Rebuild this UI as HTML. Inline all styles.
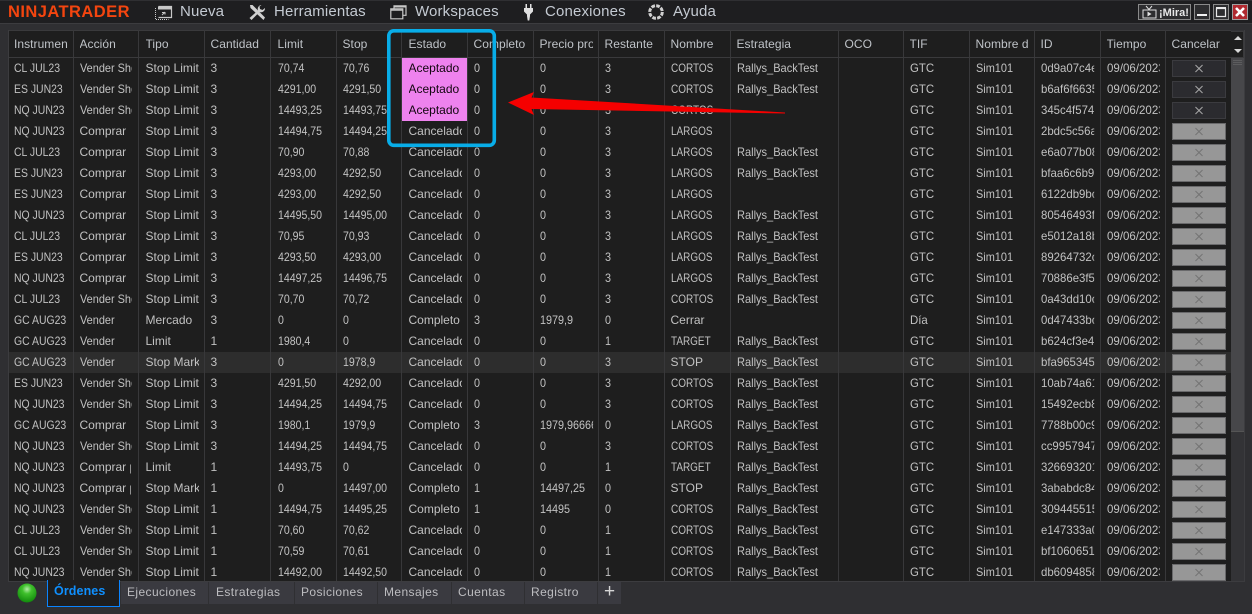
<!DOCTYPE html>
<html><head><meta charset="utf-8"><style>
html,body{margin:0;padding:0}
body{width:1252px;height:614px;position:relative;overflow:hidden;background:#2f2f32;font-family:"Liberation Sans",sans-serif;color:#c2c2c2;font-size:12px}
#top{position:absolute;left:0;top:1px;width:1252px;height:22px;background:#1e1e20;border-bottom:1px solid #3c3c3f}
.m{position:absolute;top:3px;font-size:15px;line-height:18px;color:#c4cad2;letter-spacing:.15px}
#logo{position:absolute;left:8px;top:3px;font-size:16.5px;line-height:18px;font-weight:bold;color:#f4450f;letter-spacing:.45px}
svg{position:absolute;overflow:visible}
#grid{position:absolute;left:8px;top:30px;width:1236px;height:552px;background:#333336;border:0}
table{border-collapse:collapse;table-layout:fixed;width:1223px;position:absolute;left:0;top:0}
td,th{padding:0;border-right:1px solid #38383a;height:21px;overflow:hidden;white-space:nowrap;font-weight:normal;text-align:left;background:#1e1e1e;line-height:21px}
th{height:26px;border-bottom:1px solid #3a3a3c;border-top:1px solid #3a3a3c;color:#bfc3c8;line-height:26px}
th b{display:block;font-weight:normal;overflow:hidden;margin:0 5px 0 6px;letter-spacing:.05px}
td b{--s:1;display:block;font-weight:normal;overflow:hidden;margin:0 0 0 6px;transform:scaleX(var(--s));transform-origin:0 0;width:calc(53px / var(--s))}
td:nth-child(3) b,td:nth-child(5) b,td:nth-child(7) b,th:nth-child(3) b,th:nth-child(5) b,th:nth-child(7) b{margin-left:7px}
td:nth-child(1) b{--s:.87}
td:nth-child(2) b{--s:.91;width:calc(51.8px / var(--s))}
td:nth-child(5) b,td:nth-child(6) b{--s:.88}
td:nth-child(8) b,td:nth-child(9) b,td:nth-child(10) b{--s:.9}
td:nth-child(11) b{--s:.83;width:70px}
td:nth-child(12) b{--s:.92;width:105px}
td:nth-child(14) b{--s:.95}
td:nth-child(15) b{--s:.91}
td:nth-child(16) b{--s:.95}
td:nth-child(17) b{--s:.96}
b.w{--s:1!important}
tr.h td{background:#2d2d2d}
td.p{background:#ee82ee;color:#12060f}
.a,.d{display:block;width:54px;height:17px;margin:0 0 0 6px;box-sizing:border-box;position:relative}
.a{background:#2b2b2f;border:1px solid #3b3b3f}
.d{background:#979797;border:1px solid #69696b}
.a:before,.a:after,.d:before,.d:after{content:"";position:absolute;left:21px;top:7px;width:10px;height:1px;background:#a8a8a8;transform:rotate(45deg)}
.a:after,.d:after{transform:rotate(-45deg)}
.d:before,.d:after{background:#747474}
#wrap{position:absolute;left:0;top:0;width:1223px;height:552px;overflow:hidden}
.tab{position:absolute;top:582px;height:22px;background:#3a3a40;line-height:20px;color:#bdbdc0;letter-spacing:.4px;white-space:nowrap;box-sizing:border-box}
</style></head><body>
<div id="top"></div>
<div id="logo">NINJATRADER</div>

<svg style="left:155px;top:5px" width="18" height="15" fill="none" stroke="#c8c8c8"><path d="M3.500 1.500h13v11h-13" stroke-width="1.200"/><path d="M3 1.500h13v3H3z" fill="#c8c8c8" stroke="none"/><path d="M.5 3v11.500h13" stroke-dasharray="1 1"/><path d="M7 10l3-3M7 7.500h3v2" stroke-width="1"/></svg>
<div class="m" style="left:180px">Nueva</div>
<svg style="left:248px;top:4px" width="19" height="17"><path d="M2 1l2.500 0 12.500 12.500-1.500 2.500L2.500 4z" fill="#d0d0d0"/><path d="M13.500 1a4 4 0 0 0-3.500 5.500L1.500 14l2 2 8-8a4 4 0 0 0 5.500-4l-2.500 2-2.500-1-.5-2.500z" fill="#d0d0d0"/></svg>
<div class="m" style="left:274px">Herramientas</div>
<svg style="left:390px;top:5px" width="17" height="15" fill="none" stroke="#c8c8c8" stroke-width="1.200"><path d="M4 3.500V.8h12v9.500h-3"/><path d="M.8 3.800h12v10H.800z"/><path d="M4 1.800h12M1 5h12" stroke-width="1.500"/></svg>
<div class="m" style="left:415px">Workspaces</div>
<svg style="left:523px;top:4px" width="11" height="17" fill="#e0e0e0"><path d="M2.500 0h1.500v4h3V0h1.500v4H10v3.500L7 10.500V12L6.300 16.500H4.700L4 12V10.500L1 7.500V4h1.500z"/></svg>
<div class="m" style="left:545px">Conexiones</div>
<svg style="left:647px;top:3px" width="18" height="18" fill="none"><circle cx="9" cy="9" r="6.300" stroke="#d0d0d0" stroke-width="3" stroke-dasharray="3.700 1.250"/></svg>
<div class="m" style="left:673px">Ayuda</div>

<svg style="left:1138px;top:4px" width="110" height="17">
<rect x=".5" y=".5" width="52" height="15" fill="#2d2d2f" stroke="#8a8a8a"/>
<path d="M5 6h13v8H5z" fill="none" stroke="#e0e0e0"/><path d="M9.500 7.500l4 2.500-4 2.500z" fill="#e0e0e0"/><path d="M8 2l3 3.500L14 2" fill="none" stroke="#e0e0e0"/>
<text x="21" y="12" font-size="11" font-weight="bold" fill="#e8e8e8" font-family="Liberation Sans">¡Mira!</text>
<rect x="56.500" y=".5" width="15" height="15" fill="#2d2d2f" stroke="#8a8a8a"/><path d="M59 10h10v2H59z" fill="#f0f0f0"/>
<rect x="75.500" y=".5" width="15" height="15" fill="#2d2d2f" stroke="#8a8a8a"/><path d="M78.500 4.500h9v8h-9z" fill="none" stroke="#e8e8e8" stroke-width="1.200"/><path d="M78 3h10v2H78z" fill="#e8e8e8"/>
<rect x="94.500" y=".5" width="15" height="15" fill="#b02a30" stroke="#a0a0a0"/><path d="M98 4l8 8m0-8l-8 8" stroke="#fff" stroke-width="2.600"/>
</svg>

<div id="grid"><div id="wrap">
<table>
<colgroup><col style="width:65px"><col style="width:65px"><col style="width:66px"><col style="width:66px"><col style="width:66px"><col style="width:65px"><col style="width:66px"><col style="width:66px"><col style="width:65px"><col style="width:66px"><col style="width:66px"><col style="width:108px"><col style="width:65px"><col style="width:66px"><col style="width:65px"><col style="width:66px"><col style="width:65px"><col style="width:66px"></colgroup>
<tr><th><b>Instrumento</b></th><th><b>Acción</b></th><th><b>Tipo</b></th><th><b>Cantidad</b></th><th><b>Limit</b></th><th><b>Stop</b></th><th><b>Estado</b></th><th><b>Completo</b></th><th><b>Precio promedio</b></th><th><b>Restante</b></th><th><b>Nombre</b></th><th><b>Estrategia</b></th><th><b>OCO</b></th><th><b>TIF</b></th><th><b>Nombre de cuenta</b></th><th><b>ID</b></th><th><b>Tiempo</b></th><th><b>Cancelar</b></th></tr>
<tr><td><b>CL JUL23</b></td><td><b>Vender Short</b></td><td><b>Stop Limit</b></td><td><b>3</b></td><td><b>70,74</b></td><td><b>70,76</b></td><td class="p"><b>Aceptado</b></td><td><b>0</b></td><td><b>0</b></td><td><b>3</b></td><td><b>CORTOS</b></td><td><b>Rallys_BackTest</b></td><td></td><td><b>GTC</b></td><td><b>Sim101</b></td><td><b>0d9a07c4e1</b></td><td><b>09/06/2023</b></td><td><span class="a"></span></td></tr>
<tr><td><b>ES JUN23</b></td><td><b>Vender Short</b></td><td><b>Stop Limit</b></td><td><b>3</b></td><td><b>4291,00</b></td><td><b>4291,50</b></td><td class="p"><b>Aceptado</b></td><td><b>0</b></td><td><b>0</b></td><td><b>3</b></td><td><b>CORTOS</b></td><td><b>Rallys_BackTest</b></td><td></td><td><b>GTC</b></td><td><b>Sim101</b></td><td><b>b6af6f6635</b></td><td><b>09/06/2023</b></td><td><span class="a"></span></td></tr>
<tr><td><b>NQ JUN23</b></td><td><b>Vender Short</b></td><td><b>Stop Limit</b></td><td><b>3</b></td><td><b>14493,25</b></td><td><b>14493,75</b></td><td class="p"><b>Aceptado</b></td><td><b>0</b></td><td><b>0</b></td><td><b>3</b></td><td><b>CORTOS</b></td><td></td><td></td><td><b>GTC</b></td><td><b>Sim101</b></td><td><b>345c4f5743</b></td><td><b>09/06/2023</b></td><td><span class="a"></span></td></tr>
<tr><td><b>NQ JUN23</b></td><td><b class="w">Comprar</b></td><td><b>Stop Limit</b></td><td><b>3</b></td><td><b>14494,75</b></td><td><b>14494,25</b></td><td><b>Cancelado</b></td><td><b>0</b></td><td><b>0</b></td><td><b>3</b></td><td><b>LARGOS</b></td><td></td><td></td><td><b>GTC</b></td><td><b>Sim101</b></td><td><b>2bdc5c56a1</b></td><td><b>09/06/2023</b></td><td><span class="d"></span></td></tr>
<tr><td><b>CL JUL23</b></td><td><b class="w">Comprar</b></td><td><b>Stop Limit</b></td><td><b>3</b></td><td><b>70,90</b></td><td><b>70,88</b></td><td><b>Cancelado</b></td><td><b>0</b></td><td><b>0</b></td><td><b>3</b></td><td><b>LARGOS</b></td><td><b>Rallys_BackTest</b></td><td></td><td><b>GTC</b></td><td><b>Sim101</b></td><td><b>e6a077b081</b></td><td><b>09/06/2023</b></td><td><span class="d"></span></td></tr>
<tr><td><b>ES JUN23</b></td><td><b class="w">Comprar</b></td><td><b>Stop Limit</b></td><td><b>3</b></td><td><b>4293,00</b></td><td><b>4292,50</b></td><td><b>Cancelado</b></td><td><b>0</b></td><td><b>0</b></td><td><b>3</b></td><td><b>LARGOS</b></td><td><b>Rallys_BackTest</b></td><td></td><td><b>GTC</b></td><td><b>Sim101</b></td><td><b>bfaa6c6b91</b></td><td><b>09/06/2023</b></td><td><span class="d"></span></td></tr>
<tr><td><b>ES JUN23</b></td><td><b class="w">Comprar</b></td><td><b>Stop Limit</b></td><td><b>3</b></td><td><b>4293,00</b></td><td><b>4292,50</b></td><td><b>Cancelado</b></td><td><b>0</b></td><td><b>0</b></td><td><b>3</b></td><td><b>LARGOS</b></td><td></td><td></td><td><b>GTC</b></td><td><b>Sim101</b></td><td><b>6122db9bc1</b></td><td><b>09/06/2023</b></td><td><span class="d"></span></td></tr>
<tr><td><b>NQ JUN23</b></td><td><b class="w">Comprar</b></td><td><b>Stop Limit</b></td><td><b>3</b></td><td><b>14495,50</b></td><td><b>14495,00</b></td><td><b>Cancelado</b></td><td><b>0</b></td><td><b>0</b></td><td><b>3</b></td><td><b>LARGOS</b></td><td><b>Rallys_BackTest</b></td><td></td><td><b>GTC</b></td><td><b>Sim101</b></td><td><b>80546493f1</b></td><td><b>09/06/2023</b></td><td><span class="d"></span></td></tr>
<tr><td><b>CL JUL23</b></td><td><b class="w">Comprar</b></td><td><b>Stop Limit</b></td><td><b>3</b></td><td><b>70,95</b></td><td><b>70,93</b></td><td><b>Cancelado</b></td><td><b>0</b></td><td><b>0</b></td><td><b>3</b></td><td><b>LARGOS</b></td><td><b>Rallys_BackTest</b></td><td></td><td><b>GTC</b></td><td><b>Sim101</b></td><td><b>e5012a18b1</b></td><td><b>09/06/2023</b></td><td><span class="d"></span></td></tr>
<tr><td><b>ES JUN23</b></td><td><b class="w">Comprar</b></td><td><b>Stop Limit</b></td><td><b>3</b></td><td><b>4293,50</b></td><td><b>4293,00</b></td><td><b>Cancelado</b></td><td><b>0</b></td><td><b>0</b></td><td><b>3</b></td><td><b>LARGOS</b></td><td><b>Rallys_BackTest</b></td><td></td><td><b>GTC</b></td><td><b>Sim101</b></td><td><b>89264732c1</b></td><td><b>09/06/2023</b></td><td><span class="d"></span></td></tr>
<tr><td><b>NQ JUN23</b></td><td><b class="w">Comprar</b></td><td><b>Stop Limit</b></td><td><b>3</b></td><td><b>14497,25</b></td><td><b>14496,75</b></td><td><b>Cancelado</b></td><td><b>0</b></td><td><b>0</b></td><td><b>3</b></td><td><b>LARGOS</b></td><td><b>Rallys_BackTest</b></td><td></td><td><b>GTC</b></td><td><b>Sim101</b></td><td><b>70886e3f51</b></td><td><b>09/06/2023</b></td><td><span class="d"></span></td></tr>
<tr><td><b>CL JUL23</b></td><td><b>Vender Short</b></td><td><b>Stop Limit</b></td><td><b>3</b></td><td><b>70,70</b></td><td><b>70,72</b></td><td><b>Cancelado</b></td><td><b>0</b></td><td><b>0</b></td><td><b>3</b></td><td><b>CORTOS</b></td><td><b>Rallys_BackTest</b></td><td></td><td><b>GTC</b></td><td><b>Sim101</b></td><td><b>0a43dd10c1</b></td><td><b>09/06/2023</b></td><td><span class="d"></span></td></tr>
<tr><td><b>GC AUG23</b></td><td><b>Vender</b></td><td><b>Mercado</b></td><td><b>3</b></td><td><b>0</b></td><td><b>0</b></td><td><b>Completo</b></td><td><b>3</b></td><td><b>1979,9</b></td><td><b>0</b></td><td><b class="w">Cerrar</b></td><td></td><td></td><td><b>Día</b></td><td><b>Sim101</b></td><td><b>0d47433bc1</b></td><td><b>09/06/2023</b></td><td><span class="d"></span></td></tr>
<tr><td><b>GC AUG23</b></td><td><b>Vender</b></td><td><b>Limit</b></td><td><b>1</b></td><td><b>1980,4</b></td><td><b>0</b></td><td><b>Cancelado</b></td><td><b>0</b></td><td><b>0</b></td><td><b>1</b></td><td><b>TARGET</b></td><td><b>Rallys_BackTest</b></td><td></td><td><b>GTC</b></td><td><b>Sim101</b></td><td><b>b624cf3e41</b></td><td><b>09/06/2023</b></td><td><span class="d"></span></td></tr>
<tr class="h"><td><b>GC AUG23</b></td><td><b>Vender</b></td><td><b>Stop Market</b></td><td><b>3</b></td><td><b>0</b></td><td><b>1978,9</b></td><td><b>Cancelado</b></td><td><b>0</b></td><td><b>0</b></td><td><b>3</b></td><td><b class="w">STOP</b></td><td><b>Rallys_BackTest</b></td><td></td><td><b>GTC</b></td><td><b>Sim101</b></td><td><b>bfa9653451</b></td><td><b>09/06/2023</b></td><td><span class="d"></span></td></tr>
<tr><td><b>ES JUN23</b></td><td><b>Vender Short</b></td><td><b>Stop Limit</b></td><td><b>3</b></td><td><b>4291,50</b></td><td><b>4292,00</b></td><td><b>Cancelado</b></td><td><b>0</b></td><td><b>0</b></td><td><b>3</b></td><td><b>CORTOS</b></td><td><b>Rallys_BackTest</b></td><td></td><td><b>GTC</b></td><td><b>Sim101</b></td><td><b>10ab74a611</b></td><td><b>09/06/2023</b></td><td><span class="d"></span></td></tr>
<tr><td><b>NQ JUN23</b></td><td><b>Vender Short</b></td><td><b>Stop Limit</b></td><td><b>3</b></td><td><b>14494,25</b></td><td><b>14494,75</b></td><td><b>Cancelado</b></td><td><b>0</b></td><td><b>0</b></td><td><b>3</b></td><td><b>CORTOS</b></td><td><b>Rallys_BackTest</b></td><td></td><td><b>GTC</b></td><td><b>Sim101</b></td><td><b>15492ecb81</b></td><td><b>09/06/2023</b></td><td><span class="d"></span></td></tr>
<tr><td><b>GC AUG23</b></td><td><b class="w">Comprar</b></td><td><b>Stop Limit</b></td><td><b>3</b></td><td><b>1980,1</b></td><td><b>1979,9</b></td><td><b>Completo</b></td><td><b>3</b></td><td><b>1979,96666</b></td><td><b>0</b></td><td><b>LARGOS</b></td><td><b>Rallys_BackTest</b></td><td></td><td><b>GTC</b></td><td><b>Sim101</b></td><td><b>7788b00c91</b></td><td><b>09/06/2023</b></td><td><span class="d"></span></td></tr>
<tr><td><b>NQ JUN23</b></td><td><b>Vender Short</b></td><td><b>Stop Limit</b></td><td><b>3</b></td><td><b>14494,25</b></td><td><b>14494,75</b></td><td><b>Cancelado</b></td><td><b>0</b></td><td><b>0</b></td><td><b>3</b></td><td><b>CORTOS</b></td><td><b>Rallys_BackTest</b></td><td></td><td><b>GTC</b></td><td><b>Sim101</b></td><td><b>cc99579471</b></td><td><b>09/06/2023</b></td><td><span class="d"></span></td></tr>
<tr><td><b>NQ JUN23</b></td><td><b class="w">Comprar para</b></td><td><b>Limit</b></td><td><b>1</b></td><td><b>14493,75</b></td><td><b>0</b></td><td><b>Cancelado</b></td><td><b>0</b></td><td><b>0</b></td><td><b>1</b></td><td><b>TARGET</b></td><td><b>Rallys_BackTest</b></td><td></td><td><b>GTC</b></td><td><b>Sim101</b></td><td><b>3266932011</b></td><td><b>09/06/2023</b></td><td><span class="d"></span></td></tr>
<tr><td><b>NQ JUN23</b></td><td><b class="w">Comprar para</b></td><td><b>Stop Market</b></td><td><b>1</b></td><td><b>0</b></td><td><b>14497,00</b></td><td><b>Completo</b></td><td><b>1</b></td><td><b>14497,25</b></td><td><b>0</b></td><td><b class="w">STOP</b></td><td><b>Rallys_BackTest</b></td><td></td><td><b>GTC</b></td><td><b>Sim101</b></td><td><b>3ababdc841</b></td><td><b>09/06/2023</b></td><td><span class="d"></span></td></tr>
<tr><td><b>NQ JUN23</b></td><td><b>Vender Short</b></td><td><b>Stop Limit</b></td><td><b>1</b></td><td><b>14494,75</b></td><td><b>14495,25</b></td><td><b>Completo</b></td><td><b>1</b></td><td><b>14495</b></td><td><b>0</b></td><td><b>CORTOS</b></td><td><b>Rallys_BackTest</b></td><td></td><td><b>GTC</b></td><td><b>Sim101</b></td><td><b>3094455151</b></td><td><b>09/06/2023</b></td><td><span class="d"></span></td></tr>
<tr><td><b>CL JUL23</b></td><td><b>Vender Short</b></td><td><b>Stop Limit</b></td><td><b>1</b></td><td><b>70,60</b></td><td><b>70,62</b></td><td><b>Cancelado</b></td><td><b>0</b></td><td><b>0</b></td><td><b>1</b></td><td><b>CORTOS</b></td><td><b>Rallys_BackTest</b></td><td></td><td><b>GTC</b></td><td><b>Sim101</b></td><td><b>e147333a01</b></td><td><b>09/06/2023</b></td><td><span class="d"></span></td></tr>
<tr><td><b>CL JUL23</b></td><td><b>Vender Short</b></td><td><b>Stop Limit</b></td><td><b>1</b></td><td><b>70,59</b></td><td><b>70,61</b></td><td><b>Cancelado</b></td><td><b>0</b></td><td><b>0</b></td><td><b>1</b></td><td><b>CORTOS</b></td><td><b>Rallys_BackTest</b></td><td></td><td><b>GTC</b></td><td><b>Sim101</b></td><td><b>bf10606511</b></td><td><b>09/06/2023</b></td><td><span class="d"></span></td></tr>
<tr><td><b>NQ JUN23</b></td><td><b>Vender Short</b></td><td><b>Stop Limit</b></td><td><b>1</b></td><td><b>14492,00</b></td><td><b>14492,50</b></td><td><b>Cancelado</b></td><td><b>0</b></td><td><b>0</b></td><td><b>1</b></td><td><b>CORTOS</b></td><td><b>Rallys_BackTest</b></td><td></td><td><b>GTC</b></td><td><b>Sim101</b></td><td><b>db60948581</b></td><td><b>09/06/2023</b></td><td><span class="d"></span></td></tr>
</table></div></div>

<!-- scrollbar -->
<div style="position:absolute;left:1231px;top:31px;width:13px;height:27px;background:#1e1e1e;border:solid #3a3a3c;border-width:1px 1px 1px 0;box-sizing:border-box"></div>
<svg style="left:1232px;top:34px" width="12" height="22" fill="#d8d8d8"><path d="M2 6l4-4 4 4z"/><path d="M2 15l4 4 4-4z"/></svg>
<div style="position:absolute;left:1231px;top:58px;width:13px;height:373px;background:#47474a;border-bottom:1px solid #555"></div>
<div style="position:absolute;left:1233px;top:60px;width:9px;height:1px;background:#5c5c5e;box-shadow:0 2px #5c5c5e,0 4px #5c5c5e"></div>
<div style="position:absolute;left:1244px;top:30px;width:1px;height:552px;background:#3c3c3f"></div>
<div style="position:absolute;left:8px;top:581px;width:1237px;height:1px;background:#3c3c3f"></div>
<div style="position:absolute;left:8px;top:30px;width:1px;height:552px;background:#3c3c3f"></div>

<!-- tabs -->
<svg style="left:17px;top:583px" width="20" height="20"><defs><radialGradient id="g" cx=".5" cy=".3" r=".7"><stop offset="0" stop-color="#b4eca8"/><stop offset=".35" stop-color="#3fc02c"/><stop offset="1" stop-color="#118a0c"/></radialGradient></defs><circle cx="10" cy="10" r="9.500" fill="url(#g)"/></svg>
<div class="tab" style="left:47px;top:580px;width:73px;height:27px;background:#1e1e1e;border:solid #0a84ff;border-width:0 1px 1px 1px;color:#0f90ff;font-weight:bold;line-height:23px;font-size:12.500px;padding-left:6px;letter-spacing:.1px">Órdenes</div>
<div class="tab" style="left:121px;width:87px;padding-left:6px">Ejecuciones</div>
<div class="tab" style="left:209px;width:85px;padding-left:7px">Estrategias</div>
<div class="tab" style="left:295px;width:82px;padding-left:6px">Posiciones</div>
<div class="tab" style="left:378px;width:73px;padding-left:6px">Mensajes</div>
<div class="tab" style="left:452px;width:72px;padding-left:6px">Cuentas</div>
<div class="tab" style="left:525px;width:72px;padding-left:6px">Registro</div>
<div class="tab" style="left:598px;width:23px;font-size:19px;color:#d5d5d5;text-align:center;letter-spacing:0">+</div>

<!-- annotations -->
<svg style="left:0;top:0" width="1252" height="614">
<rect x="388.800" y="30.800" width="105.500" height="114.500" rx="5" fill="none" stroke="#08ade8" stroke-width="3.600"/>
<path d="M508 102.500L534 92 531.500 97.500 785 112.500 785 113.500 531.500 109 534 115z" fill="#f50000"/>
</svg>
</body></html>
